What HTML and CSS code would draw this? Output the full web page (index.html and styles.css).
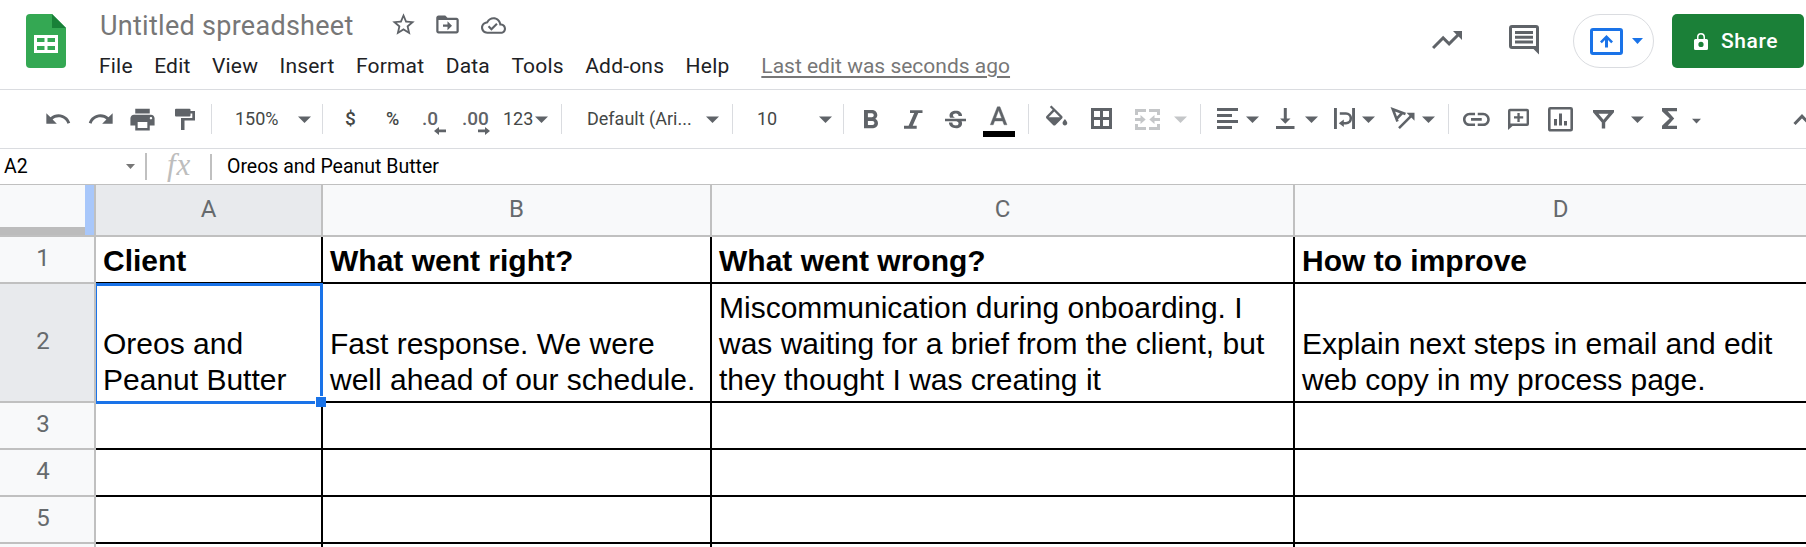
FILE: index.html
```
<!DOCTYPE html>
<html lang="en">
<head>
<meta charset="utf-8">
<title>Untitled spreadsheet</title>
<link rel="stylesheet" href="styles.css">
</head>
<body>
<svg class="defs" aria-hidden="true">
  <symbol id="caret" viewBox="0 0 13 30"><path d="M0 12.5h13l-6.5 6.6z"/></symbol>
</svg>
<div class="app">
  <header class="header">
    <svg class="logo" viewBox="0 0 40 54"><path fill="#34a853" d="M4 0h22l14 14v36a4 4 0 0 1-4 4H4a4 4 0 0 1-4-4V4a4 4 0 0 1 4-4z"/><path fill="#188038" d="M26 0l14 14H26z"/><path fill="#fff" fill-rule="evenodd" d="M8 21h24v18H8zM11 24v4h7.500v-4zM21.500 24v4H29v-4zM11 32v4h7.500v-4zM21.500 32v4H29v-4z"/></svg>
    <div class="heading">
      <div class="title-row">
        <h1 class="title">Untitled spreadsheet</h1>
        <svg class="title-icon star" viewBox="0 0 24 24"><path d="M22 9.240l-7.190-.62L12 2 9.190 8.630 2 9.240l5.460 4.730L5.820 21 12 17.270 18.180 21l-1.630-7.030L22 9.240zM12 15.400l-3.760 2.270 1-4.280-3.320-2.880 4.380-.38L12 6.100l1.710 4.040 4.380.38-3.320 2.880 1 4.280L12 15.400z"/></svg>
        <svg class="title-icon folder" viewBox="0 0 24 24"><path d="M20 6h-8l-2-2H4c-1.100 0-2 .9-2 2v12c0 1.100.9 2 2 2h16c1.100 0 2-.9 2-2V8c0-1.100-.9-2-2-2zm0 12H4V8h16v10zm-8-1l4-4-4-4v3H8v2h4z"/></svg>
        <svg class="title-icon cloud" viewBox="0 0 24 24"><path d="M19.350 10.040C18.670 6.590 15.640 4 12 4 9.110 4 6.600 5.640 5.350 8.040 2.340 8.360 0 10.910 0 14c0 3.310 2.690 6 6 6h13c2.760 0 5-2.240 5-5 0-2.640-2.050-4.780-4.650-4.960zM19 18H6c-2.210 0-4-1.790-4-4 0-2.050 1.530-3.760 3.560-3.970l1.070-.11.5-.95C8.080 7.140 9.940 6 12 6c2.620 0 4.880 1.860 5.390 4.430l.3 1.500 1.530.11c1.560.1 2.780 1.410 2.780 2.960 0 1.650-1.350 3-3 3zm-9-3.820l-2.090-2.090L6.500 13.500 10 17l6.010-6.010-1.410-1.410z" /></svg>
      </div>
      <nav class="menu"><span>File</span><span>Edit</span><span>View</span><span>Insert</span><span>Format</span><span>Data</span><span>Tools</span><span>Add-ons</span><span>Help</span><a class="last-edit">Last edit was seconds ago</a></nav>
    </div>
    <div class="actions">
      <svg class="trend" viewBox="0 0 24 24"><path d="M16 6l2.290 2.290-4.880 4.880-4-4L2 16.590 3.410 18l6-6 4 4 6.300-6.290L22 12V6z"/></svg>
      <svg class="comments" viewBox="0 0 30 30"><path fill-rule="evenodd" d="M3 0h24a3 3 0 0 1 3 3v26.500L24.500 24H3a3 3 0 0 1-3-3V3a3 3 0 0 1 3-3zm0 3v18h24V3zM6 6h18v3H6zM6 10.800h18v3H6zM6 15.500h18v3H6z"/></svg>
      <div class="present">
        <svg class="present-icon" viewBox="0 0 33 27"><rect x="1.500" y="1.500" width="30" height="24" rx="1.500" fill="none" stroke="#1a73e8" stroke-width="3"/><path d="M16.500 7l6.500 6.500-1.800 1.800-3.200-3.200v7.400h-3v-7.400l-3.200 3.200-1.800-1.800z"/></svg>
        <svg class="present-caret" viewBox="0 0 11 6"><path d="M0 0h11L5.500 6z"/></svg>
      </div>
      <button class="share"><svg class="lock" viewBox="0 0 14 17"><path fill-rule="evenodd" d="M1.500 6H3V4a4 4 0 0 1 8 0v2h1.500A1.500 1.500 0 0 1 14 7.500v8a1.500 1.500 0 0 1-1.500 1.500h-11A1.500 1.500 0 0 1 0 15.500v-8A1.500 1.500 0 0 1 1.500 6zm3 0h5V4a2.500 2.500 0 0 0-5 0zM7 8.800a2.600 2.600 0 1 0 0 5.200 2.600 2.600 0 0 0 0-5.200z"/></svg>Share</button>
    </div>
  </header>

  <div class="toolbar">
    <svg class="i28" viewBox="0 0 24 24"><path d="M12.500 8c-2.650 0-5.050.99-6.900 2.600L2 7v9h9l-3.620-3.620c1.390-1.160 3.160-1.880 5.120-1.880 3.540 0 6.550 2.310 7.600 5.500l2.370-.78C21.080 11.030 17.150 8 12.500 8z"/></svg>
    <svg class="i28" viewBox="0 0 24 24"><path d="M18.400 10.600C16.550 8.990 14.150 8 11.500 8c-4.650 0-8.580 3.030-9.960 7.220L3.900 16c1.050-3.190 4.050-5.500 7.600-5.500 1.950 0 3.730.72 5.120 1.880L13 16h9V7l-3.600 3.600z"/></svg>
    <svg class="i29" viewBox="0 0 24 24"><path d="M19 8H5c-1.660 0-3 1.340-3 3v6h4v4h12v-4h4v-6c0-1.660-1.340-3-3-3zm-3 11H8v-5h8v5zm3-7c-.55 0-1-.45-1-1s.45-1 1-1 1 .45 1 1-.45 1-1 1zm-1-9H6v4h12V3z"/></svg>
    <svg class="w20" viewBox="0 0 20 30"><path d="M1 4.800h13.500a1 1 0 0 1 1 1V7H20v9.500H9.500V26H6V14h11.300v-4.500h-1.800v2a1 1 0 0 1-1 1H1a1 1 0 0 1-1-1V5.800a1 1 0 0 1 1-1z"/></svg>
    <i class="sep"></i>
    <span>150%</span>
    <svg class="caret"><use href="#caret"/></svg>
    <i class="sep"></i>
    <span class="medium">$</span>
    <span class="medium percent">%</span>
    <span class="decimal">.0<svg class="dec-arrow less" viewBox="0 0 12 8"><path d="M5 0v2.600h7v2.600H5V8L0 4z"/></svg></span>
    <span class="decimal">.00<svg class="dec-arrow more" viewBox="0 0 12 8"><path d="M7 0v2.600H0v2.600h7V8l5-4z"/></svg></span>
    <span>123</span>
    <svg class="caret"><use href="#caret"/></svg>
    <i class="sep"></i>
    <span>Default (Ari...</span>
    <svg class="caret"><use href="#caret"/></svg>
    <i class="sep"></i>
    <span>10</span>
    <svg class="caret"><use href="#caret"/></svg>
    <i class="sep"></i>
    <svg class="w20" viewBox="0 0 20 30"><path transform="translate(-9.100 .8) scale(1.300)" d="M15.600 10.790c.97-.67 1.650-1.770 1.650-2.790 0-2.260-1.750-4-4-4H7v14h7.040c2.090 0 3.710-1.700 3.710-3.790 0-1.520-.86-2.820-2.150-3.420zM10 6.500h3c.83 0 1.500.67 1.500 1.500s-.67 1.500-1.500 1.500h-3v-3zm3.500 9H10v-3h3.500c.83 0 1.500.67 1.500 1.500s-.67 1.500-1.500 1.500z"/></svg>
    <svg class="w20" viewBox="0 0 20 30"><path d="M6 6.200h12.500v2.900h-4.200L8.700 21.800h4v2.900H0v-2.900h4.600L10.200 9.100H6z"/></svg>
    <svg class="w21" viewBox="0 0 21 30"><path transform="translate(-3.500 3.200) scale(1.167)" d="M7.240 8.750c-.26-.48-.39-1.030-.39-1.670 0-.61.13-1.160.4-1.670.26-.5.63-.93 1.110-1.290.48-.35 1.050-.63 1.700-.83.66-.19 1.390-.29 2.180-.29.81 0 1.540.11 2.210.34.66.22 1.230.54 1.690.94.47.4.83.88 1.080 1.430.25.55.38 1.150.38 1.810h-3.010c0-.31-.05-.59-.15-.85-.09-.27-.24-.49-.44-.68-.2-.19-.45-.33-.75-.44-.3-.1-.66-.16-1.060-.16-.39 0-.74.04-1.030.13-.29.09-.53.21-.72.36-.19.16-.34.34-.44.55-.1.21-.15.43-.15.66 0 .48.25.88.74 1.210.38.25.77.48 1.410.7H7.390c-.05-.08-.11-.17-.15-.25zM21 12v-2H3v2h9.620c.18.07.4.14.55.2.37.17.66.34.87.51.21.17.35.36.43.57.07.2.11.43.11.69 0 .23-.05.45-.14.66-.09.2-.23.38-.42.53-.19.15-.42.26-.71.35-.29.08-.63.13-1.010.13-.43 0-.83-.04-1.180-.13s-.66-.23-.91-.42c-.25-.19-.45-.44-.59-.75-.14-.31-.25-.76-.25-1.210H6.400c0 .55.08 1.130.24 1.580.16.45.37.85.65 1.210.28.35.6.66.98.92.37.26.78.48 1.220.65.44.17.9.3 1.380.39.48.08.96.13 1.440.13.8 0 1.530-.09 2.180-.28s1.210-.45 1.670-.79c.46-.34.82-.77 1.070-1.270s.38-1.070.38-1.710c0-.6-.1-1.140-.31-1.610-.05-.11-.11-.23-.17-.33H21z"/></svg>
    <svg class="w32" viewBox="0 0 32 30"><path transform="translate(.3 -1) scale(1.280)" d="M11 3L5.500 17h2.250l1.120-3h6.250l1.120 3h2.250L13 3h-2zm-1.380 9L12 5.670 14.380 12H9.620z" stroke="#5f6368" stroke-width=".35"/><path fill="#000" d="M0 27h32v6H0z"/></svg>
    <i class="sep"></i>
    <svg class="w22" viewBox="0 0 22 30"><path transform="translate(-3.500 1.400) scale(1.180)" d="M16.560 8.940L7.620 0 6.210 1.410l2.380 2.380-5.150 5.150c-.59.59-.59 1.540 0 2.120l5.500 5.500c.29.29.68.44 1.060.44s.77-.15 1.060-.44l5.500-5.500c.59-.58.59-1.530 0-2.120zM5.210 10L10 5.210 14.790 10H5.210zM19 11.500s-2 2.170-2 3.500c0 1.100.9 2 2 2s2-.9 2-2c0-1.330-2-3.500-2-3.500z"/></svg>
    <svg class="w21" viewBox="0 0 21 30"><path fill-rule="evenodd" d="M0 4h21v21H0zM3 7v6h6V7zM12 7v6h6V7zM3 16v6h6v-6zM12 16v6h6v-6z"/></svg>
    <svg class="w25 off" viewBox="0 0 25 30"><path d="M0 5h11v3H3v3H0zM14 5h11v6h-3V8h-8zM0 20h3v3h8v3H0zM22 20h3v6H14v-3h8zM0 14h5.500v-3l5.200 4.500-5.200 4.500v-3H0zM25 14h-5.500v-3l-5.200 4.500 5.200 4.500v-3H25z"/></svg>
    <svg class="caret off"><use href="#caret"/></svg>
    <i class="sep"></i>
    <svg class="w21" viewBox="0 0 21 30"><path d="M0 4h21v3H0zM0 10h15v3H0zM0 16h21v3H0zM0 22h15v3H0z"/></svg>
    <svg class="caret"><use href="#caret"/></svg>
    <svg class="w20" viewBox="0 0 20 30"><path d="M0 22h18.500v3H0zM7.800 4h3v10.500h3.700l-5.200 5.300-5.200-5.300h3.700z"/></svg>
    <svg class="caret"><use href="#caret"/></svg>
    <svg class="w21" viewBox="0 0 21 30"><path d="M0 4h2.900v21H0zM18.100 4H21v21h-2.900zM9.800 15.500v7.500L4.800 19.300z"/><path class="line" d="M5.800 9.500h6.200a4.800 4.800 0 0 1 0 9.700H9"/></svg>
    <svg class="caret"><use href="#caret"/></svg>
    <svg class="w25" viewBox="0 0 25 30"><path class="line" d="M14.500 10L1.800 5.200l4.700 12.300M11.200 9l-5.300 5.500M8 24.200L21 11.200"/><path d="M15.500 8.700h8v8z"/></svg>
    <svg class="caret"><use href="#caret"/></svg>
    <i class="sep"></i>
    <svg class="w27" viewBox="0 0 27 30"><path transform="translate(-2.700 -.7) scale(1.340)" d="M3.900 12c0-1.710 1.390-3.100 3.100-3.100h4V7H7c-2.760 0-5 2.240-5 5s2.240 5 5 5h4v-1.900H7c-1.710 0-3.100-1.390-3.100-3.100zM8 13h8v-2H8v2zm9-6h-4v1.900h4c1.710 0 3.100 1.390 3.100 3.100s-1.390 3.100-3.100 3.100h-4V17h4c2.760 0 5-2.240 5-5s-2.240-5-5-5z"/></svg>
    <svg class="w21" viewBox="0 0 21 30"><path fill-rule="evenodd" d="M2 4.800h17a2 2 0 0 1 2 2V20a2 2 0 0 1-2 2H4.500L0 26V6.800a2 2 0 0 1 2-2zm.4 2.400v12.400h16.200V7.200zM9.400 9h2.300v3.300h3.500v2.300h-3.500V18H9.400v-3.400H6v-2.300h3.400z"/></svg>
    <svg class="w25" viewBox="0 0 25 30"><rect class="line" x="1.300" y="4.300" width="22.400" height="22" rx="1"/><path d="M6 15h3v6.500H6zM11 9.500h3v12h-3zM16 17h3v4.500h-3z"/></svg>
    <svg class="w21" viewBox="0 0 21 30"><path fill-rule="evenodd" d="M0 6h21v2.300L12.200 18.500V24.500H8.800v-6L0 8.300zM5.500 9.700l5 6 5-6z"/></svg>
    <svg class="caret"><use href="#caret"/></svg>
    <svg class="w20" viewBox="0 0 20 30"><path d="M0 4h15v3.200H5.700l6.500 7.300-6.500 7.300H15V25H0v-3.200l7.600-7.300L0 7.200z"/></svg>
    <svg class="small-caret" viewBox="0 0 9 30"><path d="M0 14.800h9l-4.500 4.700z"/></svg>
    <svg class="chevron" viewBox="0 0 18 30"><path class="line thick" d="M1.500 20L9 12.200l7.500 7.800"/></svg>
  </div>

  <div class="formula-bar">
    <div class="name-box">A2<svg class="name-caret" viewBox="0 0 9 5"><path d="M0 0h9L4.500 5z"/></svg></div>
    <div class="fx">fx</div>
    <div class="formula">Oreos and Peanut Butter</div>
  </div>

  <main class="sheet">
    <div class="corner"><i class="freeze-row"></i><i class="freeze-col"></i></div>
    <div class="col-head active">A</div><div class="col-head">B</div><div class="col-head">C</div><div class="col-head">D</div>

    <div class="row-head">1</div>
    <div class="cell bold">Client</div><div class="cell bold">What went right?</div><div class="cell bold">What went wrong?</div><div class="cell bold">How to improve</div>

    <div class="row-head active">2</div>
    <div class="cell selected">Oreos and<br>Peanut Butter<i class="selection"></i><i class="handle"></i></div>
    <div class="cell">Fast response. We were<br>well ahead of our schedule.</div>
    <div class="cell">Miscommunication during onboarding. I<br>was waiting for a brief from the client, but<br>they thought I was creating it</div>
    <div class="cell">Explain next steps in email and edit<br>web copy in my process page.</div>

    <div class="row-head">3</div><div class="cell"></div><div class="cell"></div><div class="cell"></div><div class="cell"></div>
    <div class="row-head">4</div><div class="cell"></div><div class="cell"></div><div class="cell"></div><div class="cell"></div>
    <div class="row-head">5</div><div class="cell"></div><div class="cell"></div><div class="cell"></div><div class="cell"></div>
    <div class="row-head"></div><div class="cell"></div><div class="cell"></div><div class="cell"></div><div class="cell"></div>
  </main>
</div>
</body>
</html>
```
FILE: styles.css
```
* { box-sizing: border-box; }
body { margin: 0; background: #fff; font-family: Roboto, sans-serif; }
svg { display: block; fill: #5f6368; overflow: visible; }
.defs { display: none; }
.app { width: 1806px; height: 547px; overflow: hidden; }

/* Title, menus and sharing */
.header { display: flex; height: 90px; border-bottom: 1px solid #dadce0; }
.logo { width: 40px; height: 54px; margin: 14px 0 0 26px; flex: none; }
.heading { margin-left: 33px; flex: 1; }
.title-row { display: flex; height: 50px; padding: 9px 0 0 1px; }
.title { margin: 0; width: 290px; font-size: 27px; line-height: 34px; font-weight: 400; letter-spacing: .28px; color: #777; white-space: nowrap; }
.title-icon { width: 27px; height: 27px; margin-top: 2px; }
.folder { margin-left: 17px; }
.cloud { width: 25px; height: 25px; margin: 4px 0 0 20px; }
.menu { display: flex; gap: 21.400px; font-size: 21px; line-height: 32px; letter-spacing: .2px; color: #202124; white-space: nowrap; }
.last-edit { margin-left: 10.500px; letter-spacing: 0; color: #777; text-decoration: underline; text-underline-offset: 3px; text-decoration-thickness: 2px; }
.actions { display: flex; padding-top: 14px; }
.trend { width: 36px; height: 36px; margin: 8px 44px 0 0; }
.comments { width: 30px; height: 30px; margin: 11px 34px 0 0; }
.present { display: flex; align-items: center; width: 81px; height: 54px; margin-right: 18px; padding-left: 16px; border: 1px solid #dadce0; border-radius: 27px; }
.present svg { fill: #1a73e8; }
.present-icon { width: 33px; height: 27px; margin-right: 9px; }
.present-caret { width: 11px; height: 6px; }
.share { display: flex; align-items: center; width: 132px; height: 54px; margin: 0 2px 0 0; padding: 0 0 0 22px; gap: 13px; border: 0; border-radius: 5px; background: #1b8038; color: #fff; font: 500 21px/54px Roboto, sans-serif; letter-spacing: .6px; }
.lock { width: 14px; height: 17px; fill: #fff; }

/* Each track runs from one control's left edge to the next one's */
.toolbar {
  display: grid;
  align-items: center;
  height: 59px;
  padding-left: 44px;
  border-bottom: 1px solid #dadce0;
  color: #444746;
  font-size: 18px;
  line-height: 30px;
  white-space: nowrap;
  grid-template-columns:
    43px 41px 47px 36px 24px 63px 24px 23px 41px
    36px 40px 41px 32px 26px 26px 119px 26px 25px
    62px 24px 21px 40px 41px 38px 45px 18px 45px 44px
    39px 26px 17px 29px 30px 29px 29px 28px 29px 31px 26px 15px 45px
    40px 45px 38px 31px 30px 101px 18px;
}
.toolbar svg { height: 30px; }
.toolbar .i28 { width: 28px; height: 28px; }
.toolbar .i29 { width: 29px; height: 29px; }
.w20 { width: 20px; }
.w21 { width: 21px; }
.w22 { width: 22px; }
.w25 { width: 25px; }
.w27 { width: 27px; }
.w32 { width: 32px; }
.caret { width: 13px; }
.small-caret { width: 9px; }
.chevron { width: 18px; }
.sep { width: 1px; height: 30px; background: #dadce0; }
.off { fill: #c4c6c8; }
.line { fill: none; stroke: #5f6368; stroke-width: 2.600; }
.thick { stroke-width: 3; }
.medium { font-weight: 500; font-size: 19px; }
.percent { font-size: 18px; }
.decimal { position: relative; font-weight: 500; font-size: 19px; color: #5f6368; }
.toolbar .dec-arrow { position: absolute; width: 12px; height: 8px; top: 23px; }
.less { left: 12px; }
.more { left: 16px; }

/* Name box and formula input */
.formula-bar { display: flex; align-items: center; height: 36px; border-bottom: 1px solid #c0c0c0; font-size: 19.500px; line-height: 35px; color: #000; }
.name-box { display: flex; align-items: center; justify-content: space-between; width: 147px; height: 27px; padding: 0 10px 0 4px; border-right: 2px solid #c0c0c0; }
.name-caret { width: 9px; height: 5px; fill: #777; }
.fx { width: 65px; height: 26px; padding-left: 20px; border-right: 2px solid #c0c0c0; font: italic 31px/22px "Liberation Serif", serif; color: #bdbdbd; letter-spacing: 1px; }
.formula { padding-left: 15px; }

/* Grid */
.sheet { display: grid; width: 1828px; grid-template-columns: 96px 227px 389px 583px 533px; grid-template-rows: 52px 47px 119px 47px 47px 47px 47px; }
.corner, .col-head, .row-head { background: #f8f9fa; border: solid #c0c0c0; border-width: 0 2px 2px 0; color: #666a6d; font-size: 24px; text-align: center; }
.corner { position: relative; }
.freeze-row { position: absolute; left: 0; bottom: 0; width: 85px; height: 8px; background: #bcbcbc; }
.freeze-col { position: absolute; right: 0; top: 0; width: 9px; height: 50px; background: #a8c7fa; }
.col-head { line-height: 48px; }
.row-head { display: flex; align-items: center; justify-content: center; padding: 0 8px 3px 0; }
.col-head.active, .row-head.active { background: #e8eaed; }
.cell { display: grid; align-content: end; padding: 0 0 3px 7px; border: solid #000; border-width: 0 2px 2px 0; font: 30px/36px "Liberation Sans", Arial, sans-serif; color: #000; white-space: nowrap; }
.bold { font-weight: 700; }
.selected { position: relative; }
.selection { position: absolute; left: 0; top: -1px; width: 227px; height: 121px; border: 3px solid #1a73e8; border-left-width: 1px; }
.handle { position: absolute; left: 219px; top: 112px; width: 11px; height: 11px; background: #1a73e8; border: solid #fff; border-width: 1px 0 0 1px; }
```
